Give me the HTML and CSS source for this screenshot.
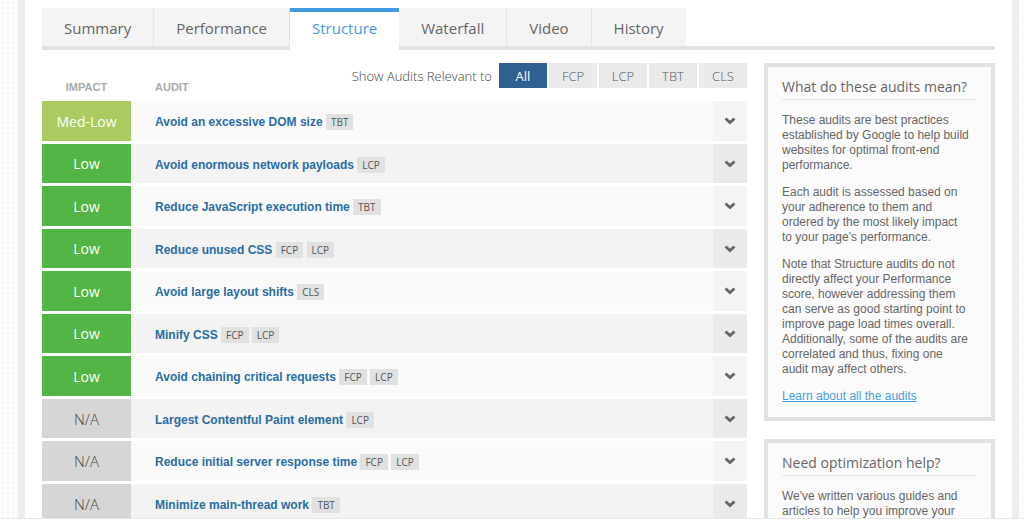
FILE: index.html
```html
<!DOCTYPE html>
<html lang="en">
<head>
  <meta charset="UTF-8">
  <meta name="viewport" content="width=device-width, initial-scale=1.0">
  <title>Performance Report - Structure</title>
  <link rel="stylesheet" href="styles.css">
</head>
<body>
  <svg class="sprite" aria-hidden="true">
    <symbol id="chevron" viewBox="0 0 12 8">
      <path d="M1.5 1.5 L6 5.6 L10.5 1.5" fill="none" stroke="#666" stroke-width="2.8"/>
    </symbol>
  </svg>
  <div class="page">
    <nav class="tabs">
      <a href="#summary">Summary</a>
      <a href="#performance">Performance</a>
      <a href="#structure" class="active">Structure</a>
      <a href="#waterfall">Waterfall</a>
      <a href="#video">Video</a>
      <a href="#history">History</a>
    </nav>

    <div class="content">
      <main>
        <table class="audits">
          <thead>
            <tr>
              <th class="impact-head">IMPACT</th>
              <th class="audit-head" colspan="2">
                <div class="head-row">
                  <span>AUDIT</span>
                  <div class="filter">
                    <span class="filter-label">Show Audits Relevant to</span>
                    <button type="button" class="selected">All</button>
                    <button type="button">FCP</button>
                    <button type="button">LCP</button>
                    <button type="button">TBT</button>
                    <button type="button">CLS</button>
                  </div>
                </div>
              </th>
            </tr>
          </thead>
          <tbody>
            <tr>
              <td class="impact med-low">Med-Low</td>
              <td class="audit"><a href="#dom-size">Avoid an excessive DOM size</a> <span class="tag">TBT</span></td>
              <td class="expand"><button type="button" aria-label="Expand"><svg><use href="#chevron"/></svg></button></td>
            </tr>
            <tr>
              <td class="impact low">Low</td>
              <td class="audit"><a href="#payloads">Avoid enormous network payloads</a> <span class="tag">LCP</span></td>
              <td class="expand"><button type="button" aria-label="Expand"><svg><use href="#chevron"/></svg></button></td>
            </tr>
            <tr>
              <td class="impact low">Low</td>
              <td class="audit"><a href="#js-time">Reduce JavaScript execution time</a> <span class="tag">TBT</span></td>
              <td class="expand"><button type="button" aria-label="Expand"><svg><use href="#chevron"/></svg></button></td>
            </tr>
            <tr>
              <td class="impact low">Low</td>
              <td class="audit"><a href="#unused-css">Reduce unused CSS</a> <span class="tag">FCP</span> <span class="tag">LCP</span></td>
              <td class="expand"><button type="button" aria-label="Expand"><svg><use href="#chevron"/></svg></button></td>
            </tr>
            <tr>
              <td class="impact low">Low</td>
              <td class="audit"><a href="#layout-shifts">Avoid large layout shifts</a> <span class="tag">CLS</span></td>
              <td class="expand"><button type="button" aria-label="Expand"><svg><use href="#chevron"/></svg></button></td>
            </tr>
            <tr>
              <td class="impact low">Low</td>
              <td class="audit"><a href="#minify-css">Minify CSS</a> <span class="tag">FCP</span> <span class="tag">LCP</span></td>
              <td class="expand"><button type="button" aria-label="Expand"><svg><use href="#chevron"/></svg></button></td>
            </tr>
            <tr>
              <td class="impact low">Low</td>
              <td class="audit"><a href="#critical-requests">Avoid chaining critical requests</a> <span class="tag">FCP</span> <span class="tag">LCP</span></td>
              <td class="expand"><button type="button" aria-label="Expand"><svg><use href="#chevron"/></svg></button></td>
            </tr>
            <tr>
              <td class="impact">N/A</td>
              <td class="audit"><a href="#lcp-element">Largest Contentful Paint element</a> <span class="tag">LCP</span></td>
              <td class="expand"><button type="button" aria-label="Expand"><svg><use href="#chevron"/></svg></button></td>
            </tr>
            <tr>
              <td class="impact">N/A</td>
              <td class="audit"><a href="#server-response">Reduce initial server response time</a> <span class="tag">FCP</span> <span class="tag">LCP</span></td>
              <td class="expand"><button type="button" aria-label="Expand"><svg><use href="#chevron"/></svg></button></td>
            </tr>
            <tr>
              <td class="impact">N/A</td>
              <td class="audit"><a href="#main-thread">Minimize main-thread work</a> <span class="tag">TBT</span></td>
              <td class="expand"><button type="button" aria-label="Expand"><svg><use href="#chevron"/></svg></button></td>
            </tr>
          </tbody>
        </table>
      </main>

      <aside>
        <section class="box">
          <h3>What do these audits mean?</h3>
          <p>These audits are best practices established by Google to help build websites for optimal front-end performance.</p>
          <p>Each audit is assessed based on your adherence to them and<br>ordered by the most likely impact<br>to your page's performance.</p>
          <p>Note that Structure audits do not directly affect your Performance score, however addressing them can serve as good starting point to improve page load times overall. Additionally, some of the audits are correlated and thus, fixing one<br>audit may affect others.</p>
          <p><a href="#all-audits">Learn about all the audits</a></p>
        </section>
        <section class="box">
          <h3>Need optimization help?</h3>
          <p>We've written various guides and articles to help you improve your</p>
        </section>
      </aside>
    </div>
  </div>
</body>
</html>
```

FILE: styles.css
```css
* {
  box-sizing: border-box;
}

html {
  background: #fff;
}

body {
  margin: 0;
  height: calc(100vh - 3px);
  padding: 0 5px 0 18px;
  border-bottom: 1px solid #e6e6e6;
  font-family: Arial, "Liberation Sans", sans-serif;
  font-size: 12px;
  color: #666;
  background-color: #fcfcfc;
  background-image:
    repeating-linear-gradient(90deg, #fff 0 1px, transparent 1px 5px),
    repeating-linear-gradient(#fff 0 1px, #f9f9f9 1px 5px);
}

.sprite {
  display: none;
}

.page {
  height: 100%;
  overflow: hidden;
  padding: 8px 17px 0;
  background: #fff;
  border-left: 7px solid #eee;
  border-right: 7px solid #eee;
}

/* Tabs */
.tabs {
  display: flex;
  height: 42px;
  background: linear-gradient(#e1e1e1, #e1e1e1) bottom / 100% 4px no-repeat;
}

.tabs a {
  padding: 0 22px;
  line-height: 40px;
  font-family: "Open Sans", sans-serif;
  font-size: 15px;
  color: #666;
  text-decoration: none;
  background: #f4f4f4;
  border-right: 1px solid #e4e4e4;
  border-bottom: 4px solid #e1e1e1;
}

.tabs a:last-child {
  border-right: none;
}

.tabs a.active {
  line-height: 32px;
  color: #3f9ae0;
  background: #fff;
  border-top: 4px solid #3f9ae0;
  border-right: none;
  border-bottom: none;
}

.content {
  display: flex;
  gap: 17px;
  padding-top: 10px;
}

main {
  flex: 1;
}

/* Audits */
.audits {
  width: 100%;
  border-collapse: separate;
  border-spacing: 0 3px;
}

.audits th {
  height: 35px;
  padding: 0;
  vertical-align: top;
  font-size: 11px;
  color: #aaa;
}

.audits .impact-head {
  width: 89px;
  padding-top: 18px;
}

.audits .audit-head {
  padding-left: 24px;
}

.head-row {
  display: flex;
  align-items: flex-start;
  justify-content: space-between;
}

.head-row > span {
  padding-top: 18px;
}

.filter {
  display: flex;
  align-items: center;
  gap: 2px;
  font-family: "Open Sans", sans-serif;
  font-weight: 300;
  color: #444;
}

.filter-label {
  margin-right: 5px;
  font-size: 13px;
}

.filter button {
  width: 48px;
  height: 25px;
  padding: 0;
  border: none;
  font: inherit;
  font-size: 13px;
  color: #555;
  background: #eaeaea;
  cursor: pointer;
}

.filter button.selected {
  font-weight: 400;
  color: #fff;
  background: #305f92;
}

.audits td {
  height: 40px;
  padding: 0;
  background: #fafafa;
}

.audits tr:nth-child(even) td {
  height: 39px;
  background: #f3f3f3;
}

.audits .audit {
  padding-top: 2px;
  padding-left: 24px;
  font-size: 12px;
}

.audit a {
  font-weight: bold;
  color: #2a6da3;
  text-decoration: none;
}

.tag {
  display: inline-block;
  padding: 0 5px;
  line-height: 16px;
  font-family: "Open Sans", sans-serif;
  font-size: 10px;
  color: #555;
  background: #e1e1e1;
}

.audits td.impact,
.audits tr:nth-child(even) td.impact {
  text-align: center;
  font-family: "Open Sans", sans-serif;
  font-size: 15px;
  font-weight: 300;
  color: #444;
  background: #d6d6d6;
}

.audits td.low,
.audits tr:nth-child(even) td.low {
  font-size: 14px;
  font-weight: 400;
  color: #fff;
  background: #52b545;
}

.audits td.med-low {
  font-size: 14px;
  font-weight: 400;
  color: #fff;
  background: #a9cb60;
}

.audits .expand {
  width: 34px;
  background: #f4f4f4;
}

.audits tr:nth-child(even) .expand {
  background: #eaeaea;
}

.expand button {
  display: flex;
  align-items: center;
  justify-content: center;
  width: 100%;
  height: 39px;
  padding: 0;
  border: none;
  background: none;
  cursor: pointer;
}

.expand svg {
  width: 12px;
  height: 8px;
}

/* Sidebar */
aside {
  width: 231px;
  padding-top: 3px;
}

.box {
  margin-bottom: 18px;
  padding: 11px 14px 13px;
  background: #fbfbfb;
  border: 4px solid #e1e1e1;
}

.box h3 {
  margin: 0 0 13px;
  padding-bottom: 3px;
  line-height: 18px;
  font-family: "Open Sans", sans-serif;
  font-size: 14px;
  font-weight: 400;
  border-bottom: 1px solid #e4e4e4;
}

.box p {
  margin: 0 0 12px;
  line-height: 15px;
}

.box p:last-child {
  margin-bottom: 0;
}

.box a {
  color: #4a9de0;
}
```
